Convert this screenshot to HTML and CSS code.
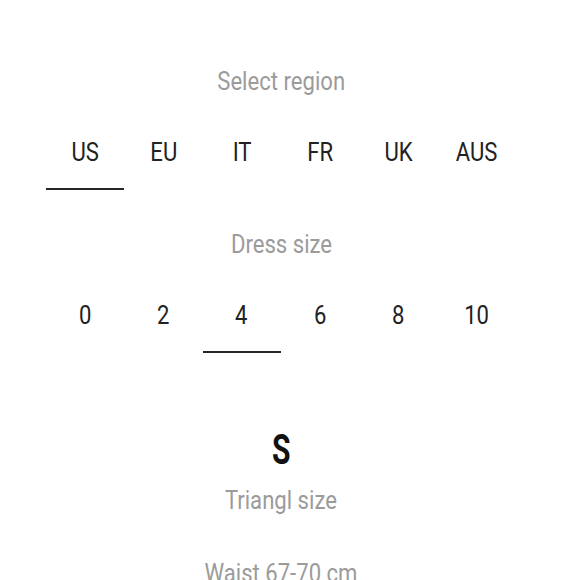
FILE: index.html
```html
<!DOCTYPE html>
<html>
<head>
<meta charset="utf-8">
<link rel="stylesheet" href="styles.css">
</head>
<body>
<div class="page">
  <div class="label first"><span class="cond">Select region</span></div>
  <div class="tabs">
    <div class="tab active"><span class="cond">US</span></div>
    <div class="tab"><span class="cond">EU</span></div>
    <div class="tab"><span class="cond">IT</span></div>
    <div class="tab"><span class="cond">FR</span></div>
    <div class="tab"><span class="cond">UK</span></div>
    <div class="tab"><span class="cond">AUS</span></div>
  </div>
  <div class="label second"><span class="cond">Dress size</span></div>
  <div class="tabs sizes">
    <div class="tab"><span class="cond">0</span></div>
    <div class="tab"><span class="cond">2</span></div>
    <div class="tab active"><span class="cond">4</span></div>
    <div class="tab"><span class="cond">6</span></div>
    <div class="tab"><span class="cond">8</span></div>
    <div class="tab"><span class="cond">10</span></div>
  </div>
  <div class="result"><span class="cond bold">S</span></div>
  <div class="label sub"><span class="cond">Triangl size</span></div>
  <div class="label waist"><span class="cond">Waist 67-70 cm</span></div>
</div>
</body>
</html>
```
FILE: styles.css
```css
html, body {
  margin: 0;
  padding: 0;
  background: #fff;
}
.page {
  width: 562px;
  display: flex;
  flex-direction: column;
  align-items: center;
  padding-top: 65.5px;
  font-family: "Roboto", "Liberation Sans", sans-serif;
}
.cond {
  display: inline-block;
  transform: scaleX(0.85);
  white-space: nowrap;
}
.label {
  color: #9b9b9b;
  font-size: 26px;
  line-height: 30px;
  height: 30px;
}
.tabs {
  display: flex;
  margin-top: 41px;
}
.tab {
  width: 78.4px;
  text-align: center;
  font-size: 26px;
  line-height: 30px;
  color: #222;
  padding-bottom: 21px;
  border-bottom: 2px solid transparent;
}
.tab.active {
  border-bottom-color: #262626;
}
.second {
  margin-top: 39px;
}
.result {
  margin-top: 75px;
  font-size: 43px;
  font-weight: bold;
  line-height: 42px;
  height: 42px;
  color: #111;
}
.cond.bold {
  transform: scaleX(0.7);
}
.sub {
  margin-top: 15px;
}
.waist {
  margin-top: 43px;
}
```
